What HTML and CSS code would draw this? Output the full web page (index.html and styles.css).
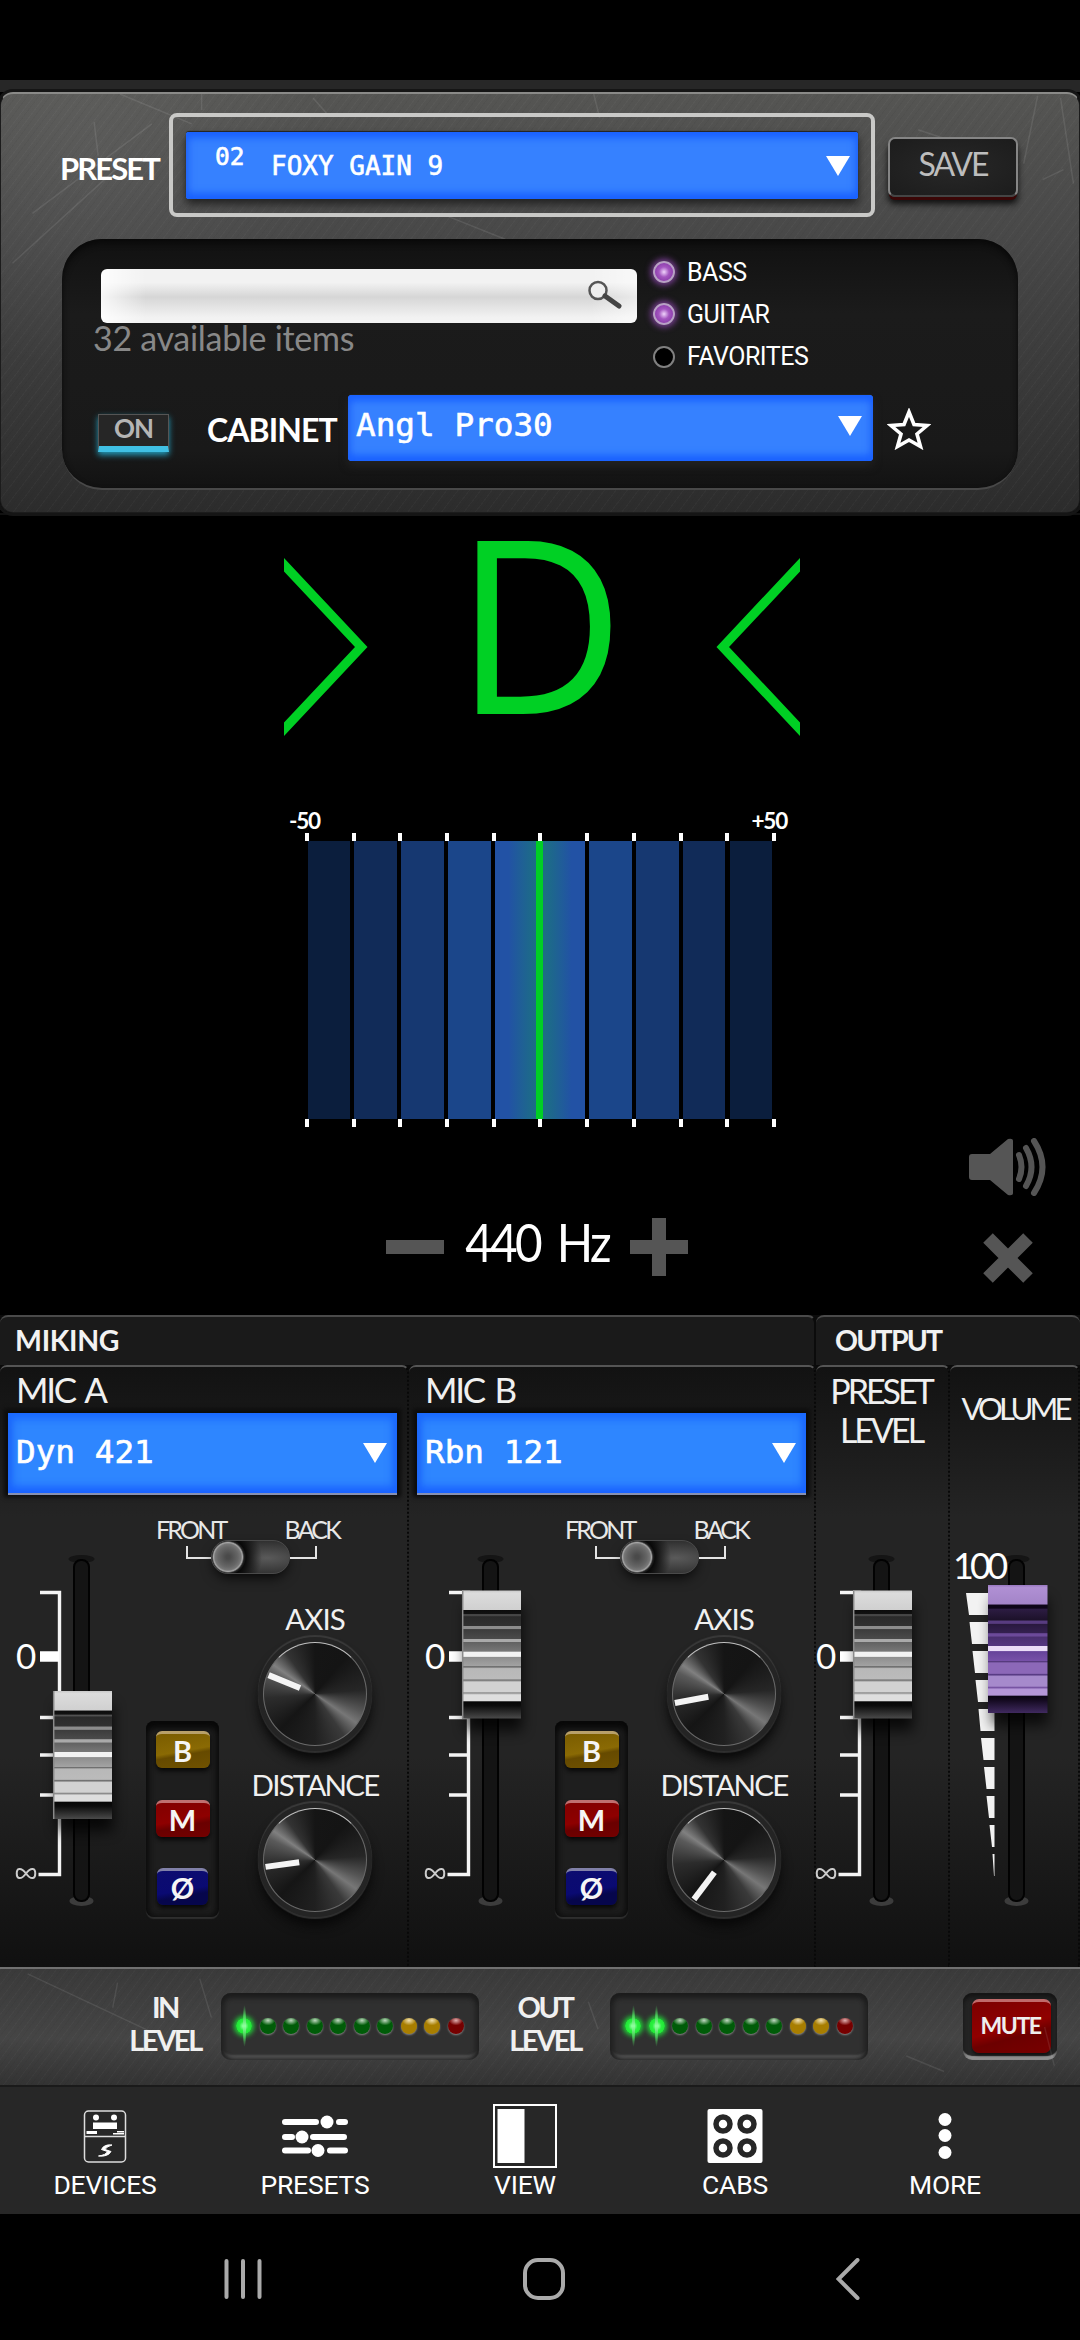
FILE: index.html
```html
<!DOCTYPE html>
<html lang="en">
<head>
    <meta charset="UTF-8">
    <meta name="viewport" content="width=device-width, initial-scale=1.0">
    <title>Cabinet - Foxy Gain 9</title>
    <link rel="stylesheet" href="styles.css">
</head>
<body>

    <!-- Shared shapes -->
    <svg class="defs" width="0" height="0">
        <defs>
            <linearGradient id="capGray" x1="0" y1="0" x2="0" y2="1">
                <stop offset="0" stop-color="#c8c8c8"/><stop offset=".02" stop-color="#dcdcdc"/><stop offset=".15" stop-color="#d0d0d0"/>
                <stop offset=".155" stop-color="#0c0c0c"/><stop offset=".18" stop-color="#111"/>
                <stop offset=".19" stop-color="#555"/><stop offset=".205" stop-color="#2a2a2a"/><stop offset=".275" stop-color="#303030"/>
                <stop offset=".28" stop-color="#8c8c8c"/><stop offset=".30" stop-color="#8c8c8c"/>
                <stop offset=".305" stop-color="#3c3c3c"/><stop offset=".375" stop-color="#4a4a4a"/>
                <stop offset=".38" stop-color="#aaa"/><stop offset=".40" stop-color="#aaa"/>
                <stop offset=".405" stop-color="#626262"/><stop offset=".475" stop-color="#777"/>
                <stop offset=".48" stop-color="#f2f2f2"/><stop offset=".515" stop-color="#f2f2f2"/>
                <stop offset=".52" stop-color="#8e8e8e"/><stop offset=".59" stop-color="#a2a2a2"/>
                <stop offset=".595" stop-color="#606060"/><stop offset=".61" stop-color="#b8b8b8"/><stop offset=".69" stop-color="#bbb"/>
                <stop offset=".70" stop-color="#6c6c6c"/><stop offset=".715" stop-color="#d2d2d2"/><stop offset=".79" stop-color="#d2d2d2"/>
                <stop offset=".80" stop-color="#888"/><stop offset=".815" stop-color="#dedede"/><stop offset=".86" stop-color="#dedede"/>
                <stop offset=".87" stop-color="#060606"/><stop offset=".90" stop-color="#0c0c0c"/><stop offset="1" stop-color="#4a4a4a"/>
            </linearGradient>
            <linearGradient id="capPurple" x1="0" y1="0" x2="0" y2="1">
                <stop offset="0" stop-color="#9878c0"/><stop offset=".02" stop-color="#b090d4"/><stop offset=".15" stop-color="#a384c8"/>
                <stop offset=".155" stop-color="#0e0618"/><stop offset=".18" stop-color="#0e0618"/>
                <stop offset=".19" stop-color="#2c1c42"/><stop offset=".275" stop-color="#1c1129"/>
                <stop offset=".28" stop-color="#583c80"/><stop offset=".30" stop-color="#583c80"/>
                <stop offset=".305" stop-color="#29193e"/><stop offset=".375" stop-color="#342050"/>
                <stop offset=".38" stop-color="#6c4a9a"/><stop offset=".40" stop-color="#6c4a9a"/>
                <stop offset=".405" stop-color="#4a2f70"/><stop offset=".475" stop-color="#543680"/>
                <stop offset=".48" stop-color="#eadcf8"/><stop offset=".515" stop-color="#eadcf8"/>
                <stop offset=".52" stop-color="#66439a"/><stop offset=".59" stop-color="#7650a8"/>
                <stop offset=".595" stop-color="#4a3070"/><stop offset=".61" stop-color="#8c68b8"/><stop offset=".69" stop-color="#8c68b8"/>
                <stop offset=".70" stop-color="#543880"/><stop offset=".715" stop-color="#a68acc"/><stop offset=".79" stop-color="#a68acc"/>
                <stop offset=".80" stop-color="#7450a0"/><stop offset=".815" stop-color="#b496d8"/><stop offset=".86" stop-color="#b496d8"/>
                <stop offset=".87" stop-color="#0a0414"/><stop offset=".90" stop-color="#140a20"/><stop offset="1" stop-color="#402a60"/>
            </linearGradient>
            <filter id="shadow" x="-50%" y="-20%" width="200%" height="150%">
                <feGaussianBlur stdDeviation="7"/>
            </filter>

            <symbol id="slot" viewBox="0 0 146 473" overflow="visible">
                <ellipse cx="81.500" cy="66" rx="13" ry="4" fill="#151515"/>
                <ellipse cx="81.500" cy="408" rx="12" ry="5" fill="#3c3c3c"/>
                <rect x="74" y="67" width="15" height="341" rx="7" fill="#141414" stroke="#020202" stroke-width="2"/>
            </symbol>
            <symbol id="scale" viewBox="0 0 146 473" overflow="visible">
                <path d="M40 99.500H59.500V381.500H38.500" fill="none" stroke="#f4f4f4" stroke-width="3.400"/>
                <path d="M40 163.500H59" stroke="#fff" stroke-width="10.500"/>
                <path d="M40 224.500H59M40 262H59M40 302H59" stroke="#f4f4f4" stroke-width="3.400"/>
                <text x="16" y="176" class="scale-zero">0</text>
                <path d="M26 380.500c-3-4-5-5-7-4.500c-3 .5-3 8.500 0 9c2 .5 4-.5 7-4.500c3-4 5-5 7-4.500c3 .5 3 8.500 0 9c-2 .5-4-.5-7-4.500z" fill="none" stroke="#ccc" stroke-width="2"/>
            </symbol>
            <symbol id="cap" viewBox="0 0 60 128" overflow="visible">
                <rect x="4" y="14" width="56" height="126" fill="#000" opacity=".75" filter="url(#shadow)"/>
                <rect x="0" y="0" width="59" height="128" fill="url(#capGray)"/>
                <path d="M.7 0V128" stroke="#8a8a8a" stroke-width="1.500"/>
            </symbol>
        </defs>
    </svg>

    <div class="status-bar"></div>

    <!-- Preset and cabinet browser -->
    <header class="metal top-panel">
        <svg class="scratches" viewBox="0 0 1080 420">
            <path d="M118 0L190 30M200 0V16M312 4L328 22M594 0L600 24M1040 2L1026 70M1063 4L1076 90M445 122L505 146M920 36L950 46M1045 86L1066 76M92 28L96 62M30 120L150 30M10 170L120 70"/>
        </svg>
        <div class="preset-row">
            <span class="label preset-label">PRESET</span>
            <div class="preset-frame">
                <div class="lcd preset-lcd">
                    <span class="preset-number">02</span>
                    <span class="preset-name">FOXY GAIN 9</span>
                    <i class="arrow"></i>
                </div>
            </div>
            <button class="save">SAVE</button>
        </div>

        <div class="browser">
            <div class="browser-top">
                <div>
                    <div class="search">
                        <svg width="34" height="30" viewBox="0 0 34 30">
                            <circle cx="10" cy="10.500" r="8.500" fill="#eee" stroke="#555" stroke-width="2.500"/>
                            <path d="M17 16L31 26" stroke="#444" stroke-width="5" stroke-linecap="round"/>
                        </svg>
                    </div>
                    <p class="count">32 available items</p>
                </div>
                <ul class="filters">
                    <li><i class="radio on"></i>BASS</li>
                    <li><i class="radio on"></i>GUITAR</li>
                    <li><i class="radio"></i>FAVORITES</li>
                </ul>
            </div>
            <div class="cabinet-row">
                <button class="power">ON</button>
                <span class="label cabinet-label">CABINET</span>
                <div class="lcd cabinet-lcd">Angl Pro30<i class="arrow"></i></div>
                <svg class="star" width="44" height="42" viewBox="0 0 44 42">
                    <path d="M22 4L27 16.500L40 17.500L30 26L33.500 38.500L22 32L10.500 38.500L14 26L4 17.500L17 16.500Z" fill="none" stroke="#fff" stroke-width="3.600"/>
                </svg>
            </div>
        </div>
    </header>

    <!-- Tuner -->
    <main class="tuner">
        <div class="note-row">
            <svg width="84" height="178" viewBox="0 0 84 178"><path d="M0 0L83.500 89L0 178V164.500L71 89L0 13.500Z" fill="#00d024"/></svg>
            <span class="note">D</span>
            <svg width="84" height="178" viewBox="0 0 84 178"><path d="M84 0L.5 89L84 178V164.500L13 89L84 13.500Z" fill="#00d024"/></svg>
        </div>
        <div class="cents"><span>-50</span><span>+50</span></div>
        <div class="ticks"><i></i><i></i><i></i><i></i><i></i><i></i><i></i><i></i><i></i><i></i><i></i></div>
        <div class="meter">
            <i class="b1"></i><i class="b2"></i><i class="b3"></i><i class="b4"></i><i class="b5"></i><i class="b4"></i><i class="b3"></i><i class="b2"></i><i class="b1"></i>
            <b class="needle"></b>
        </div>
        <div class="ticks"><i></i><i></i><i></i><i></i><i></i><i></i><i></i><i></i><i></i><i></i><i></i></div>
        <div class="tuner-foot">
            <div class="pitch">
                <i class="minus"></i>
                <span>440 Hz</span>
                <i class="plus"></i>
            </div>
            <div class="tuner-side">
                <svg width="78" height="58" viewBox="0 0 78 58">
                    <path d="M3 16H21L39 1Q44 0 44 3V55Q44 58 39 57L21 42H3Q0 42 0 39V19Q0 16 3 16Z" fill="#555"/>
                    <path d="M50 17Q55 29 50 41M57 10Q68 29 57 48M65 3Q82 29 65 55" fill="none" stroke="#555" stroke-width="6" stroke-linecap="round"/>
                </svg>
                <svg width="50" height="52" viewBox="0 0 50 52">
                    <path d="M5 6L45 46M45 6L5 46" stroke="#555" stroke-width="13.500"/>
                </svg>
            </div>
        </div>
    </main>

    <!-- Mixer -->
    <section class="mixer">
        <h2 class="group miking">MIKING</h2>
        <h2 class="group output">OUTPUT</h2>

        <div class="strip">
            <h3>MIC A</h3>
            <div class="lcd mic-lcd">Dyn 421<i class="arrow"></i></div>
            <div class="mic-body">
                <svg class="fader" viewBox="0 0 146 473">
                    <use href="#slot"/><use href="#scale"/>
                    <use href="#cap" x="53" y="198" width="60" height="128"/>
                </svg>
                <div class="switch">
                    <div class="switch-text"><span>FRONT</span><span>BACK</span></div>
                    <div class="switch-line"><i class="wire left"></i><i class="pill"></i><i class="wire right"></i></div>
                </div>
                <div class="toggles">
                    <button class="boost">B</button>
                    <button class="mute-mic">M</button>
                    <button class="phase">Ø</button>
                </div>
                <div class="knobs">
                    <span class="axis">AXIS</span>
                    <div class="knob" style="--turn: 22.4deg"><i></i></div>
                    <span class="distance">DISTANCE</span>
                    <div class="knob" style="--turn: -8deg"><i></i></div>
                </div>
            </div>
        </div>

        <div class="strip">
            <h3>MIC B</h3>
            <div class="lcd mic-lcd">Rbn 121<i class="arrow"></i></div>
            <div class="mic-body">
                <svg class="fader" viewBox="0 0 146 473">
                    <use href="#slot"/><use href="#scale"/>
                    <use href="#cap" x="53" y="97.500" width="60" height="128"/>
                </svg>
                <div class="switch">
                    <div class="switch-text"><span>FRONT</span><span>BACK</span></div>
                    <div class="switch-line"><i class="wire left"></i><i class="pill"></i><i class="wire right"></i></div>
                </div>
                <div class="toggles">
                    <button class="boost">B</button>
                    <button class="mute-mic">M</button>
                    <button class="phase">Ø</button>
                </div>
                <div class="knobs">
                    <span class="axis">AXIS</span>
                    <div class="knob" style="--turn: -10.5deg"><i></i></div>
                    <span class="distance">DISTANCE</span>
                    <div class="knob" style="--turn: -53deg"><i></i></div>
                </div>
            </div>
        </div>

        <div class="strip out-strip">
            <h3 class="preset-level">PRESET<br>LEVEL</h3>
            <svg class="fader" viewBox="16 0 134 473">
                <use href="#slot" width="146" height="473"/><use href="#scale" width="146" height="473"/>
                <use href="#cap" x="53" y="97.500" width="60" height="128"/>
            </svg>
        </div>

        <div class="strip out-strip">
            <h3 class="volume">VOLUME</h3>
            <svg class="fader" viewBox="15 0 130 473">
                <use href="#slot" width="146" height="473"/>
                <text x="18" y="86" class="scale-hundred">100</text>
                <path fill="#f2f2f2" d="M31 100H59.500V122H34ZM34.500 129H59.500V151H37ZM37.500 158H59.500V180H40ZM40.500 187H59.500V209H43ZM43.500 216H59.500V238H45.500ZM46 245H59.500V267H48.500ZM49 274H59.500V296H51.500ZM51.500 303H59.500V325H54ZM54.500 332H59.500V354H57ZM57.500 361H59.500V383H59Z"/>
                <rect x="57" y="106" width="56" height="126" fill="#000" opacity=".7" filter="url(#shadow)"/>
                <rect x="53" y="92" width="59.500" height="128" fill="url(#capPurple)"/>
            </svg>
        </div>
    </section>

    <!-- Levels -->
    <section class="metal levels">
        <svg class="scratches" viewBox="0 0 1080 120">
            <path d="M10 5L140 66M103 14L98 40M188 10L200 50M919 90L958 106M1062 60L1072 100M590 34L600 62"/>
        </svg>
        <span class="level-name">IN<br>LEVEL</span>
        <div class="leds">
            <i class="lit"></i><i></i><i></i><i></i><i></i><i></i><i></i><i class="yellow"></i><i class="yellow"></i><i class="red"></i>
        </div>
        <span class="level-name out-name">OUT<br>LEVEL</span>
        <div class="leds">
            <i class="lit"></i><i class="lit"></i><i></i><i></i><i></i><i></i><i></i><i class="yellow"></i><i class="yellow"></i><i class="red"></i>
        </div>
        <div class="mute-well"><button class="mute">MUTE</button></div>
    </section>

    <!-- App tabs -->
    <nav class="tabs">
        <a>
            <svg width="44" height="66" viewBox="0 0 44 66">
                <rect x="1.500" y="8" width="41" height="51" rx="4" fill="none" stroke="#ddd" stroke-width="1.500"/>
                <circle cx="13" cy="14.500" r="3" fill="#fff"/><circle cx="31" cy="14.500" r="3" fill="#fff"/>
                <path d="M10 19.500H34V26H10ZM3.500 28H14V31H3.500ZM34 28H41V29.500H34ZM30 30H41V31.500H30Z" fill="#fff"/>
                <path d="M2 33.500H42" stroke="#ddd" stroke-width="1.500"/>
                <path d="M29 42Q21 41 18.500 46.500L24.500 48.500Q23 52 15.500 53Q25 54 28 48.500L22 46.500Q23.500 43.500 29 42Z" fill="#fff" stroke="#fff"/>
            </svg>
            DEVICES
        </a>
        <a>
            <svg width="68" height="66" viewBox="0 0 68 66">
                <path d="M4 19H35M58 19H64M4 34H11M32 34H63M4 47.500H27M49 47.500H64" stroke="#fff" stroke-width="6" stroke-linecap="round"/>
                <circle cx="46" cy="19" r="6.500" fill="#fff"/><circle cx="21" cy="34" r="6.500" fill="#fff"/><circle cx="37" cy="47.500" r="6.500" fill="#fff"/>
            </svg>
            PRESETS
        </a>
        <a>
            <svg width="64" height="66" viewBox="0 0 64 66">
                <rect x="1" y="2" width="62" height="62" fill="none" stroke="#fff" stroke-width="2"/>
                <rect x="4.500" y="6" width="27" height="54" fill="#fff"/>
            </svg>
            VIEW
        </a>
        <a>
            <svg width="56" height="66" viewBox="0 0 56 66">
                <rect x=".5" y="6" width="55" height="54" rx="2" fill="#fff"/>
                <g fill="none" stroke="#272727" stroke-width="5.500">
                    <circle cx="16" cy="21" r="7"/><circle cx="40" cy="21" r="7"/>
                    <circle cx="16" cy="45" r="7"/><circle cx="40" cy="45" r="7"/>
                </g>
            </svg>
            CABS
        </a>
        <a>
            <svg width="14" height="66" viewBox="0 0 14 66" fill="#fff">
                <circle cx="7" cy="16.500" r="6.500"/><circle cx="7" cy="32.500" r="6.500"/><circle cx="7" cy="49.500" r="6.500"/>
            </svg>
            MORE
        </a>
    </nav>

    <!-- System navigation -->
    <footer class="system">
        <svg width="38" height="42" viewBox="0 0 38 42"><path d="M2.500 3V39M19 3V39M35.500 3V39" stroke="#aaa" stroke-width="4" stroke-linecap="round"/></svg>
        <svg class="home" width="42" height="42" viewBox="0 0 42 42"><rect x="2" y="2" width="38" height="38" rx="13" fill="none" stroke="#aaa" stroke-width="4"/></svg>
        <svg width="24" height="42" viewBox="0 0 24 42"><path d="M21.500 2L2.500 21L21.500 40" fill="none" stroke="#aaa" stroke-width="4" stroke-linecap="round"/></svg>
    </footer>

</body>
</html>
```
FILE: styles.css
```css
* {
    box-sizing: border-box;
}

body {
    margin: 0;
    width: 1080px;
    height: 2340px;
    background: #000;
    color: #fff;
    font-family: Lato, "Open Sans", sans-serif;
    overflow: hidden;
}

button {
    font-family: inherit;
    padding: 0;
    border: none;
}

h2, h3, p, ul {
    margin: 0;
    padding: 0;
}

i {
    display: block;
    font-style: normal;
}

.defs {
    display: block;
}

.status-bar {
    height: 92px;
    background: linear-gradient(#000 80px, #272727 80px);
}

/* Brushed metal */
.metal {
    position: relative;
    background:
        repeating-linear-gradient(127deg, rgba(255,255,255,0.022) 0 1px, transparent 1px 4px, rgba(0,0,0,0.03) 4px 5px, transparent 5px 9px),
        radial-gradient(ellipse 230px 220px at 90px 60px, rgba(255,255,255,0.06), transparent),
        linear-gradient(#555553, #484848 35%, #333 85%, #2c2c2c);
}

.scratches {
    position: absolute;
    left: 0;
    top: 0;
    width: 100%;
    height: 100%;
    fill: none;
    stroke: rgba(255,255,255,0.09);
    stroke-width: 1.5;
}

.top-panel {
    height: 421px;
    padding-top: 19px;
    border: 1px solid #1c1c1c;
    border-top: 2px solid #8a8a88;
    border-radius: 13px;
    box-shadow: 0 0 0 3px #151515;
}

.label {
    font-weight: 700;
    font-size: 31px;
    line-height: 40px;
}

.preset-row {
    position: relative;
    display: flex;
    align-items: center;
    height: 104px;
    padding-left: 59px;
}

.preset-label {
    width: 109px;
    padding-top: 5px;
    letter-spacing: -1.9px;
}

.preset-frame {
    width: 706px;
    height: 104px;
    padding: 15px 13px;
    border: 4px solid #c9c9c7;
    border-radius: 8px;
}

/* LCD displays */
.lcd {
    display: flex;
    align-items: center;
    font-family: "DejaVu Sans Mono", monospace;
    font-size: 32.7px;
    line-height: 1;
    color: #fff;
    -webkit-text-stroke: 0.6px #fff;
    background: #3681ff;
    box-shadow: inset 0 8px 7px -2px #1a62ff, inset 0 -8px 7px -2px #1a62ff, inset 5px 0 7px -2px #2a6cf8, inset -5px 0 7px -2px #2a6cf8, 0 -1px 1px #222, 0 5px 8px #222;
}

.arrow {
    margin-left: auto;
    border: solid transparent;
    border-width: 20px 12px 0;
    border-top-color: #fff;
}

.preset-lcd {
    height: 67px;
    padding: 0 8px 0 29px;
    border-radius: 3px;
}

.preset-number {
    font-size: 24.500px;
    padding-bottom: 16px;
    width: 56px;
}

.preset-name {
    font-size: 26px;
    padding-top: 1px;
}

.save {
    width: 130px;
    height: 60px;
    margin: 3px 0 0 13px;
    padding-bottom: 6px;
    border: 2px solid #858585;
    border-bottom-color: #444;
    border-radius: 7px;
    background: radial-gradient(#282828, #1c1c1c);
    box-shadow: 0 4px 0 -1px #3a0606, 0 7px 6px #111;
    color: #bdbdbd;
    font-size: 32px;
    letter-spacing: -2px;
}

.browser {
    position: relative;
    width: 956px;
    height: 251px;
    margin: 22px 0 0 61px;
    padding: 30px 0 0 39px;
    border-radius: 40px;
    border-bottom: 2px solid #484848;
    background: linear-gradient(#111, #1b1b1b 30%, #191919 85%, #121212);
    box-shadow: inset 0 4px 6px #090909;
}

.browser-top {
    display: flex;
    height: 125px;
}

.search {
    display: flex;
    justify-content: flex-end;
    width: 536px;
    height: 54px;
    padding: 11px 15px 0 0;
    border-radius: 6px;
    background: linear-gradient(90deg, rgba(255,255,255,0.8), transparent 45px 490px, rgba(255,255,255,0.5)), linear-gradient(#f2f2f2 25%, #d6d6d6 52%, #f2f2f2 90%);
}

.count {
    margin: -1px 0 0 -8px;
    font-size: 34px;
    line-height: 32px;
    letter-spacing: -0.3px;
    color: #888;
}

.filters {
    list-style: none;
    padding-left: 16px;
    margin-top: -18px;
}

.filters li {
    display: flex;
    align-items: center;
    height: 42.300px;
    gap: 12px;
    font-family: Roboto, sans-serif;
    font-size: 25px;
    letter-spacing: -0.5px;
}

.radio {
    width: 22px;
    height: 22px;
    border: 2px solid #808080;
    border-radius: 50%;
    background: #000;
}

.radio.on {
    border-color: #b9a0c6;
    background: radial-gradient(#e6c4f4 5%, #a456c0 40%, #7a2c9c);
    box-shadow: 0 0 6px 2px #7d3f99;
}

.cabinet-row {
    display: flex;
    align-items: center;
    height: 67px;
}

.power {
    width: 71px;
    height: 38px;
    margin: 10px 38px 0 -3px;
    padding-bottom: 5px;
    border: 1.500px solid #555;
    border-bottom: 6px solid #40c0e4;
    background: #262626;
    box-shadow: 0 3px 6px #2299b8;
    color: #b5b5b5;
    font-weight: 700;
    font-size: 26px;
    line-height: 26px;
    letter-spacing: -1px;
}

.cabinet-label {
    width: 141px;
    padding-top: 4px;
    font-size: 32px;
    letter-spacing: -0.9px;
}

.cabinet-lcd {
    width: 525px;
    height: 66px;
    padding: 0 11px 4px 8px;
    border-radius: 4px;
}

.star {
    margin: 3px 0 0 14px;
}

/* Tuner */
.tuner {
    height: 802px;
    padding-top: 11px;
    background: #000;
    border-top: 2px solid #111;
}

.note-row {
    display: flex;
    justify-content: space-between;
    width: 516px;
    height: 210px;
    margin-left: 284px;
    padding-top: 32px;
}

.note {
    font-family: "Open Sans", sans-serif;
    font-size: 242px;
    line-height: 178px;
    margin-top: -27px;
    color: #00d024;
    transform: scaleX(0.97);
    transform-origin: 20px 0;
}

.cents {
    display: flex;
    justify-content: space-between;
    width: 498px;
    margin: 73px 0 0 289px;
    font-size: 22.500px;
    font-weight: 700;
    line-height: 24px;
    letter-spacing: -1.200px;
}

.ticks {
    display: flex;
    justify-content: space-between;
    width: 471px;
    height: 8px;
    margin-left: 305px;
}

.ticks i {
    width: 4px;
    background: #fff;
}

.meter {
    position: relative;
    display: grid;
    grid-template-columns: repeat(4, 42.500px) 90px repeat(4, 42.500px);
    column-gap: 4.350px;
    height: 278px;
    margin-left: 307.500px;
}

.b1 { background: #0b1e3d; }
.b2 { background: #112b58; }
.b3 { background: #163871; }
.b4 { background: #1b468a; }
.b5 { background: linear-gradient(90deg, #2252a5 15%, #1c6f84 46%, #1c6f84 55%, #2252a5 85%); }

.needle {
    position: absolute;
    left: 228.500px;
    top: 0;
    width: 6.500px;
    height: 278px;
    background: #00d024;
}

.tuner-foot {
    display: flex;
    justify-content: space-between;
    padding: 11px 33px 0 386px;
}

.pitch {
    display: flex;
    align-items: center;
    height: 60px;
    margin-top: 79px;
}

.pitch span {
    width: 186px;
    text-align: center;
    font-size: 53px;
    line-height: 60px;
    letter-spacing: -3px;
    word-spacing: 8px;
    margin-top: -10px;
    transform: scaleX(0.9);
}

.minus {
    width: 58px;
    height: 14px;
    background: #555;
}

.plus {
    width: 58px;
    height: 58px;
    background: linear-gradient(#555, #555) center / 58px 14px no-repeat, linear-gradient(#555, #555) center / 14px 58px no-repeat;
}

.tuner-side {
    display: flex;
    flex-direction: column;
    align-items: center;
    gap: 36px;
}

/* Mixer */
.mixer {
    display: grid;
    grid-template-columns: 409px 407px 134px 130px;
    grid-template-rows: 50px 602px;
    background: #0b0b0b;
}

.group {
    padding-left: 15px;
    border-top: 2px solid #4a4a4a;
    border-radius: 8px 8px 0 0;
    background: #1a1a1a;
    font-size: 28.500px;
    line-height: 47px;
    letter-spacing: -0.3px;
    color: #f2f2f2;
}

.miking {
    grid-column: span 2;
    border-right: 2px solid #0b0b0b;
}

.output {
    grid-column: span 2;
    padding-left: 19px;
    letter-spacing: -1.800px;
}

.strip {
    padding: 0 0 0 8px;
    border-top: 2px solid #555;
    border-right: 2px dotted #080808;
    border-radius: 7px 7px 0 0;
    background: linear-gradient(#121212, #242424 25%, #242424 65%, #101010);
}

.strip h3 {
    height: 46px;
    padding-left: 8px;
    font-weight: 400;
    font-size: 35px;
    line-height: 45px;
    letter-spacing: -2.300px;
    word-spacing: 4px;
    color: #f0f0f0;
}

.mic-lcd {
    width: 389px;
    height: 80px;
    padding: 0 10px 1px 8px;
    background: #2e86ff;
    box-shadow: inset 0 8px 8px -2px #1a6aff, inset 0 -8px 8px -2px #1a62ff, inset 6px 0 8px -2px #1e66f8, inset -6px 0 8px -2px #1e66f8, 0 2px 0 #8890b0, 0 0 4px 4px #0c0c0c;
}

.mic-body {
    display: grid;
    grid-template-columns: 146px 73px 160px;
    grid-template-rows: 102px 371px;
    margin-left: -8px;
}

.mic-body .fader {
    grid-row: span 2;
    width: 146px;
    height: 473px;
    overflow: visible;
}

.scale-zero {
    font-family: Lato, sans-serif;
    font-size: 35px;
    fill: #fff;
}

.scale-hundred {
    font-family: Lato, sans-serif;
    font-size: 36px;
    letter-spacing: -3.800px;
    fill: #fff;
}

.switch {
    grid-column: span 2;
    padding: 23px 0 0 10px;
}

.switch-text {
    display: flex;
    justify-content: space-between;
    width: 183px;
    font-size: 25px;
    line-height: 26px;
    letter-spacing: -2.800px;
    color: #e8e8e8;
}

.switch-line {
    display: flex;
    margin: -2px 0 0 30px;
}

.wire {
    width: 25px;
    height: 13px;
    margin-top: 6px;
    border: 2px solid #e4e4e4;
    border-top: none;
}

.wire.left {
    border-right: none;
}

.wire.right {
    border-left: none;
    width: 27px;
}

.pill {
    width: 79px;
    height: 34px;
    border-radius: 17px;
    border: 1px solid #4a4a4a;
    background: radial-gradient(circle at 16px 16px, #4a4a4a 2px, #666 10px, #777 13px, #a6a6a6 14.500px, #222 16px, rgba(0,0,0,0.85) 18px, transparent 34px), radial-gradient(ellipse at 55px 17px, #5a5a5a, #2a2a2a 80%);
    box-shadow: 0 6px 14px -4px #000;
}

.toggles {
    display: flex;
    flex-direction: column;
    align-items: center;
    width: 73px;
    height: 196px;
    margin-top: 126px;
    padding-top: 10px;
    border-radius: 8px;
    background: #1e1e1e;
    box-shadow: inset 0 0 8px #070707, inset 0 7px 6px #0a0a0a, 0 2px 1px #2e2e2e;
}

.toggles button {
    width: 54px;
    height: 37px;
    border-radius: 6px;
    border-top: 3px solid #b8a06a;
    color: #f5f5f5;
    font-weight: 700;
    font-size: 29px;
    line-height: 30px;
    box-shadow: 0 3px 4px #080808;
}

.toggles .boost {
    background: linear-gradient(170deg, #7a5c00, #8a6a04 50%, #664a00 60%, #705200);
}

.toggles .mute-mic {
    margin-top: 32px;
    border-top-color: #c07070;
    background: linear-gradient(170deg, #820000, #8e0000 50%, #6a0000 65%, #740000);
}

.toggles .phase {
    width: 51px;
    margin-top: 31px;
    border-top-color: #8080a8;
    background: linear-gradient(170deg, #0c0c70, #0a0a72 55%, #06064c 70%);
}

.knobs {
    display: flex;
    flex-direction: column;
    align-items: center;
    padding-left: 32px;
    white-space: nowrap;
    color: #f0f0f0;
}

.knobs span {
    font-size: 29.500px;
    line-height: 30px;
}

.axis {
    margin-top: 9px;
    letter-spacing: -1px;
}

.distance {
    margin-top: 24px;
    letter-spacing: -1.800px;
}

.knob {
    position: relative;
    flex: none;
    width: 104px;
    height: 104px;
    margin-top: 8px;
    border-radius: 50%;
    border: 1.500px solid #6a6a6a;
    border-top-color: #c0c0c0;
    background: conic-gradient(from 0deg, #151515, #141414 40deg, #262626 85deg, #555 110deg, #777 125deg, #3a3a3a 145deg, #202020 180deg, #151515 225deg, #2c2c2c 265deg, #5a5a5a 295deg, #808080 305deg, #333 325deg, #151515);
    box-shadow: 0 0 0 5px #242424, 0 -2px 1px 5px #3a3a3a, 0 2px 1px 5px #303030, 0 10px 12px 4px #080808;
}

.knob i {
    position: absolute;
    left: 1px;
    top: 48px;
    width: 34px;
    height: 5.500px;
    background: #f4f4f4;
    transform-origin: 49.500px 2.700px;
    transform: rotate(var(--turn));
}

.out-strip {
    padding: 0;
}

.strip .preset-level, .strip .volume {
    height: 126px;
    padding: 4px 2px 0 0;
    text-align: center;
    font-size: 34px;
    line-height: 39px;
    letter-spacing: -3px;
}

.strip .volume {
    padding: 22px 0 0 2px;
    font-size: 31px;
    letter-spacing: -3.800px;
}

.out-strip .fader {
    display: block;
    width: 134px;
    height: 473px;
    overflow: visible;
}

.out-strip:last-child .fader {
    width: 130px;
}

/* Levels */
.levels {
    display: flex;
    height: 120px;
    padding: 24px 0 0 109px;
    border-top: 2px solid #707070;
    background-color: #3c3c3c;
    background-image:
        repeating-linear-gradient(127deg, rgba(255,255,255,0.02) 0 1px, transparent 1px 4px, rgba(0,0,0,0.03) 4px 5px, transparent 5px 9px),
        linear-gradient(#3a3a3a, #454545 60%, #333);
    border-bottom: 2px solid #1a1a1a;
}

.level-name {
    width: 112px;
    text-align: center;
    font-weight: 700;
    font-size: 29px;
    line-height: 32.500px;
    letter-spacing: -2.400px;
    margin-top: -2px;
    color: #f0f0f0;
}

.out-name {
    width: 131px;
    padding-left: 13px;
    padding-right: 12px;
}

.leds {
    display: flex;
    gap: 7.500px;
    width: 258px;
    height: 67px;
    padding: 25px 0 0 15px;
    border-radius: 10px;
    background: #303030;
    box-shadow: inset 0 5px 5px #1c1c1c, inset 4px 0 4px #262626, inset -4px 0 4px #262626, inset 0 -5px 2px #505050;
}

.leds i {
    width: 16px;
    height: 16px;
    border-radius: 50%;
    background: radial-gradient(ellipse 7px 5px at 50% 15%, #c0d8c0, transparent), #005c08;
    box-shadow: 0 1px 2px #888;
}

.leds .yellow {
    background: radial-gradient(ellipse 7px 5px at 50% 15%, #f0e0b0, transparent), #a87e00;
}

.leds .red {
    background: radial-gradient(ellipse 7px 5px at 50% 15%, #e0b0b0, transparent), #760000;
}

.leds .lit {
    position: relative;
    background: radial-gradient(circle, #90ffa0 10%, #2cf040 40%, #10dc28);
    box-shadow: 0 0 5px 2px #20d838;
}

/* light flare above and below a lit led */
.leds .lit::before {
    content: "";
    position: absolute;
    left: 6.500px;
    top: -13px;
    width: 3px;
    height: 42px;
    border-radius: 50%;
    background: linear-gradient(transparent, #50d860 30%, #90ffa0 50%, #50d860 70%, transparent);
}

.mute-well {
    width: 94px;
    height: 67px;
    margin-left: 95px;
    padding: 6px 0 0 9px;
    border-radius: 9px;
    background: #242424;
    box-shadow: inset 0 4px 5px #141414, inset 0 -5px 1px -1px #929292;
}

.mute {
    width: 79px;
    height: 54px;
    padding: 0 2px 6px 0;
    border-top: 3px solid #c06a6a;
    border-radius: 7px;
    background: linear-gradient(165deg, #7c0000, #900000 50%, #6c0000 65%, #780000);
    box-shadow: 0 2px 3px #111;
    color: #eee;
    font-weight: 700;
    font-size: 23px;
    letter-spacing: -1.500px;
}

/* App tabs */
.tabs {
    display: grid;
    grid-template-columns: repeat(5, 210px);
    height: 127px;
    padding-top: 16px;
    background: #272727;
}

.tabs a {
    display: flex;
    flex-direction: column;
    align-items: center;
    font-family: Roboto, sans-serif;
    font-size: 26.500px;
    line-height: 30px;
    letter-spacing: -0.200px;
}

.tabs svg {
    margin-bottom: 1px;
}

.system {
    display: flex;
    justify-content: space-between;
    width: 636px;
    margin-left: 224px;
    padding-top: 44px;
}

.home {
    margin-right: 10px;
}
```
